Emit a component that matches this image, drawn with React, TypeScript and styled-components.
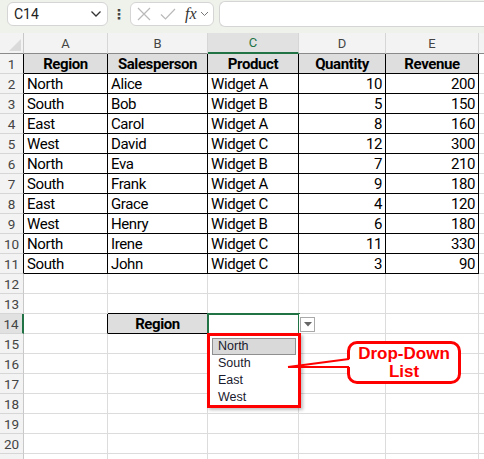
import React from 'react'
import styled, { createGlobalStyle } from 'styled-components'

const GlobalStyle = createGlobalStyle`
  html, body { margin: 0; padding: 0; background: #fff; }
  body { font-family: Roboto, "Liberation Sans", sans-serif; }
`

const COLS = ['A', 'B', 'C', 'D', 'E', 'F']
const ROW_COUNT = 21
const GRID = '#dcdcdc'
const GREEN = '#217346'

const headers = ['Region', 'Salesperson', 'Product', 'Quantity', 'Revenue']
const data: (string | number)[][] = [
  ['North', 'Alice', 'Widget A', 10, 200],
  ['South', 'Bob', 'Widget B', 5, 150],
  ['East', 'Carol', 'Widget A', 8, 160],
  ['West', 'David', 'Widget C', 12, 300],
  ['North', 'Eva', 'Widget B', 7, 210],
  ['South', 'Frank', 'Widget A', 9, 180],
  ['East', 'Grace', 'Widget C', 4, 120],
  ['West', 'Henry', 'Widget B', 6, 180],
  ['North', 'Irene', 'Widget C', 11, 330],
  ['South', 'John', 'Widget C', 3, 90],
]

// which cells have the black "all borders" formatting
const boxed = (r: number, c: number) =>
  (r >= 1 && r <= 11 && c >= 0 && c <= 4) || (r === 14 && c === 1)

const App = () => {
  const cellValue = (r: number, c: number): { text: string; bold?: boolean; align?: string; fill?: boolean } => {
    if (r === 1 && c < 5) return { text: headers[c], bold: true, align: 'center', fill: true }
    if (r >= 2 && r <= 11 && c < 5) {
      const v = data[r - 2][c]
      return { text: String(v), align: typeof v === 'number' ? 'right' : 'left' }
    }
    if (r === 14 && c === 1) return { text: 'Region', bold: true, align: 'center', fill: true }
    return { text: '' }
  }

  const rows = Array.from({ length: ROW_COUNT }, (_, i) => i + 1)

  return (
    <>
      <GlobalStyle />
      <Page>
        <FormulaBar>
          <NameBox>
            <span>C14</span>
            <svg width="12" height="8" viewBox="0 0 12 8">
              <path d="M1.5 1.5 L6 6 L10.5 1.5" fill="none" stroke="#333" strokeWidth="1.3" />
            </svg>
          </NameBox>
          <Dots>⋮</Dots>
          <FxBox>
            <svg width="14" height="14" viewBox="0 0 14 14">
              <path d="M1 1 L13 13 M13 1 L1 13" stroke="#b9b9b9" strokeWidth="1.2" />
            </svg>
            <svg width="16" height="14" viewBox="0 0 16 14">
              <path d="M1 7.5 L5.5 12 L15 2" fill="none" stroke="#b9b9b9" strokeWidth="1.2" />
            </svg>
            <Fx>fx</Fx>
            <svg width="9" height="6" viewBox="0 0 9 6">
              <path d="M1 1 L4.5 4.5 L8 1" fill="none" stroke="#777" strokeWidth="1" />
            </svg>
          </FxBox>
          <FormulaInput />
        </FormulaBar>

        <Sheet>
          <Corner />
          {COLS.map((col) => (
            <ColHead key={col} $active={col === 'C'}>{col === 'F' ? '' : col}</ColHead>
          ))}
          {rows.map((r) => (
            <React.Fragment key={r}>
              <RowHead $active={r === 14} $edge={boxed(r, 0) ? '#000' : '#c8c8c8'}>
                {r < ROW_COUNT ? r : ''}
              </RowHead>
              {COLS.map((_, c) => {
                const v = cellValue(r, c)
                const right = boxed(r, c) || boxed(r, c + 1) ? '#000' : GRID
                const bottom = boxed(r, c) || boxed(r + 1, c) ? '#000' : GRID
                return (
                  <Cell
                    key={c}
                    $bold={v.bold}
                    $align={v.align}
                    $fill={v.fill}
                    $right={right}
                    $bottom={bottom}
                    $selected={r === 14 && c === 2}
                  >
                    {v.text}
                  </Cell>
                )
              })}
            </React.Fragment>
          ))}
        </Sheet>

        <DropArrow>
          <svg width="8" height="5" viewBox="0 0 8 5">
            <path d="M0 0 H8 L4 4.5 Z" fill="#666" />
          </svg>
        </DropArrow>

        <DropList>
          <ListItem $hover>North</ListItem>
          <ListItem>South</ListItem>
          <ListItem>East</ListItem>
          <ListItem>West</ListItem>
        </DropList>

        <CalloutTail width="70" height="20" viewBox="0 0 70 20">
          <polygon points="1,17 64,9 64,17" fill="#fff" />
          <path d="M1 17 L62 9 M1 17 L62 17" stroke="#f00" strokeWidth="2" fill="none" />
        </CalloutTail>
        <Callout>
          Drop-Down
          <br />
          List
        </Callout>
      </Page>
    </>
  )
}

const Page = styled.div`
  position: relative;
  width: 484px;
  height: 459px;
  overflow: hidden;
`

const FormulaBar = styled.div`
  display: flex;
  align-items: center;
  height: 33px;
  box-sizing: border-box;
  padding: 2px 0 7px 7px;
  background: #eef2eb;
`

const NameBox = styled.div`
  display: flex;
  align-items: center;
  justify-content: space-between;
  width: 101px;
  height: 24px;
  box-sizing: border-box;
  padding: 0 5px 0 6px;
  background: #fff;
  border: 1px solid #d5d5d5;
  border-radius: 6px;
  font-size: 14px;
  color: #222;
`

const Dots = styled.div`
  width: 22px;
  text-align: center;
  font-family: "DejaVu Sans", sans-serif;
  font-size: 14px;
  font-weight: bold;
  color: #444;
`

const FxBox = styled.div`
  display: flex;
  align-items: center;
  gap: 9px;
  width: 84px;
  height: 24px;
  box-sizing: border-box;
  padding: 0 4px 0 6px;
  background: #fff;
  border: 1px solid #d5d5d5;
  border-radius: 6px;
`

const Fx = styled.span`
  font-family: "Liberation Serif", serif;
  font-style: italic;
  font-size: 16px;
  color: #333;
  margin-right: -6px;
`

const FormulaInput = styled.div`
  flex: 1;
  height: 24px;
  margin-left: 5px;
  background: #fff;
  border: 1px solid #d5d5d5;
  border-right: none;
  border-radius: 6px 0 0 6px;
`

const Sheet = styled.div`
  display: grid;
  grid-template-columns: 24px 84px 100px 91px 87px 93px 1fr;
  grid-template-rows: 21px repeat(${ROW_COUNT}, 20px);
`

const Corner = styled.div`
  position: relative;
  background: #f3f3f3;
  border-right: 1px solid #c8c8c8;
  border-bottom: 1px solid #8a8a8a;
  box-sizing: border-box;
  &::after {
    content: '';
    position: absolute;
    right: 2px;
    bottom: 2px;
    border-left: 12px solid transparent;
    border-bottom: 12px solid #dadada;
  }
`

const ColHead = styled.div<{ $active?: boolean }>`
  display: flex;
  align-items: center;
  justify-content: center;
  box-sizing: border-box;
  background: ${(p) => (p.$active ? '#e1e1e1' : '#f3f3f3')};
  border-right: 1px solid #d6d6d6;
  border-bottom: ${(p) => (p.$active ? `2px solid ${GREEN}` : '1px solid #8a8a8a')};
  font-size: 13px;
  color: ${(p) => (p.$active ? GREEN : '#444')};
`

const RowHead = styled.div<{ $active?: boolean; $edge: string }>`
  display: flex;
  align-items: center;
  justify-content: center;
  box-sizing: border-box;
  background: ${(p) => (p.$active ? '#e1e1e1' : '#f3f3f3')};
  border-right: ${(p) => (p.$active ? `2px solid ${GREEN}` : `1px solid ${p.$edge}`)};
  border-bottom: 1px solid #d6d6d6;
  font-size: 13.5px;
  color: #444;
`

const Cell = styled.div<{
  $bold?: boolean
  $align?: string
  $fill?: boolean
  $right: string
  $bottom: string
  $selected?: boolean
}>`
  display: flex;
  align-items: center;
  justify-content: ${(p) => (p.$align === 'right' ? 'flex-end' : p.$align === 'center' ? 'center' : 'flex-start')};
  box-sizing: border-box;
  padding: 1px 3px 0 3px;
  overflow: hidden;
  white-space: nowrap;
  background: ${(p) => (p.$fill ? '#dedede' : '#fff')};
  border-right: 1px solid ${(p) => p.$right};
  border-bottom: 1px solid ${(p) => p.$bottom};
  font-size: 15px;
  letter-spacing: -0.4px;
  font-weight: ${(p) => (p.$bold ? 700 : 400)};
  color: #000;
  ${(p) =>
    p.$selected &&
    `
    outline: 2px solid ${GREEN};
    outline-offset: -1px;
  `}
`

const DropArrow = styled.div`
  position: absolute;
  left: 300px;
  top: 317px;
  width: 15px;
  height: 15px;
  box-sizing: border-box;
  display: flex;
  align-items: center;
  justify-content: center;
  background: #fff;
  border: 1px solid #a9a9a9;
`

const DropList = styled.div`
  position: absolute;
  left: 207px;
  top: 333px;
  width: 94px;
  height: 75px;
  box-sizing: border-box;
  padding: 2px 2px;
  background: #fff;
  border: 3px solid #f00;
  box-shadow: 2px 2px 3px rgba(0, 0, 0, 0.25);
`

const ListItem = styled.div<{ $hover?: boolean }>`
  height: 17px;
  line-height: 15px;
  box-sizing: border-box;
  padding-left: 5px;
  font-family: "Liberation Sans", Arial, sans-serif;
  font-size: 12.5px;
  color: #1a1a2e;
  background: ${(p) => (p.$hover ? '#d9d9d9' : 'transparent')};
  border: 1px solid ${(p) => (p.$hover ? '#8f8f8f' : 'transparent')};
`

const Callout = styled.div`
  position: absolute;
  left: 347px;
  top: 341px;
  width: 114px;
  height: 43px;
  box-sizing: border-box;
  display: flex;
  align-items: center;
  justify-content: center;
  text-align: center;
  background: #fff;
  border: 3px solid #f00;
  border-radius: 10px;
  font-family: "Liberation Sans", Arial, sans-serif;
  font-weight: 700;
  font-size: 17px;
  line-height: 18px;
  color: #f00;
`

const CalloutTail = styled.svg`
  position: absolute;
  left: 287px;
  top: 350px;
  z-index: 2;
`

export default App
